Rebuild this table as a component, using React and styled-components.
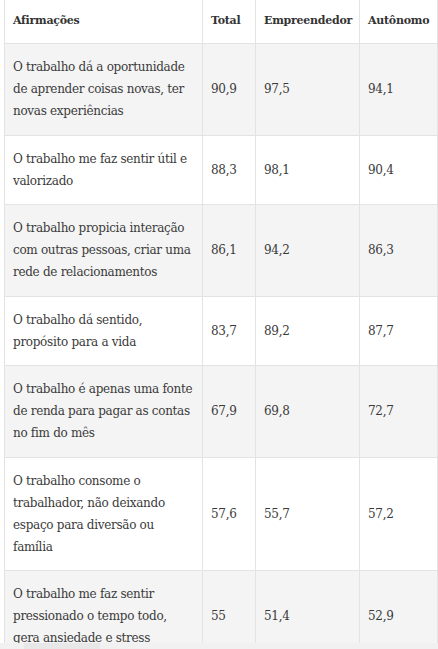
import React from "react";
import styled, { createGlobalStyle } from "styled-components";

const Global = createGlobalStyle`
  html, body { margin: 0; padding: 0; background: #fff; }
  body { width: 438px; height: 649px; overflow: hidden; }
`;

const Page = styled.div`
  display: flex;
  flex-direction: column;
  height: 649px;
`;

const Scroller = styled.div`
  flex: 1;
  overflow: hidden;
  padding-left: 4px;
`;

const Table = styled.table`
  border-collapse: collapse;
  table-layout: fixed;
  width: 433px;
  font-family: "DejaVu Serif", "Liberation Serif", serif;
  font-size: 12px;
  letter-spacing: -0.3px;
  color: #3a3a3a;
`;

const HeadCell = styled.th`
  text-align: left;
  font-weight: 700;
  font-size: 11px;
  letter-spacing: -0.25px;
  color: #333;
  padding: 10px 8px 11px;
  line-height: 22px;
  border: 1px solid #e3e3e3;
  border-top: none;
  background: #fff;
  white-space: nowrap;
`;

const Row = styled.tr`
  background: ${(p) => (p.$shade ? "#f4f4f4" : "#fff")};
`;

const Cell = styled.td`
  padding: 12px 8px 12.5px;
  line-height: 22px;
  border: 1px solid #e3e3e3;
  vertical-align: middle;
`;

const ScrollTrack = styled.div`
  height: 6px;
  background: #f1f1f1;
  display: flex;
`;

const ScrollThumb = styled.div`
  margin-left: 24px;
  width: 76px;
  background: #e8e8e8;
`;

const rows = [
  ["O trabalho dá a oportunidade de aprender coisas novas, ter novas experiências", "90,9", "97,5", "94,1"],
  ["O trabalho me faz sentir útil e valorizado", "88,3", "98,1", "90,4"],
  ["O trabalho propicia interação com outras pessoas, criar uma rede de relacionamentos", "86,1", "94,2", "86,3"],
  ["O trabalho dá sentido, propósito para a vida", "83,7", "89,2", "87,7"],
  ["O trabalho é apenas uma fonte de renda para pagar as contas no fim do mês", "67,9", "69,8", "72,7"],
  ["O trabalho consome o trabalhador, não deixando espaço para diversão ou família", "57,6", "55,7", "57,2"],
  ["O trabalho me faz sentir pressionado o tempo todo, gera ansiedade e stress", "55", "51,4", "52,9"],
];

export default function App() {
  return (
    <Page>
      <Global />
      <Scroller>
        <Table>
          <colgroup>
            <col style={{ width: 198 }} />
            <col style={{ width: 53 }} />
            <col style={{ width: 104 }} />
            <col style={{ width: 78 }} />
          </colgroup>
          <thead>
            <tr>
              <HeadCell>Afirmações</HeadCell>
              <HeadCell>Total</HeadCell>
              <HeadCell>Empreendedor</HeadCell>
              <HeadCell>Autônomo</HeadCell>
            </tr>
          </thead>
          <tbody>
            {rows.map((r, i) => (
              <Row key={i} $shade={i % 2 === 0}>
                {r.map((c, j) => (
                  <Cell key={j}>{c}</Cell>
                ))}
              </Row>
            ))}
          </tbody>
        </Table>
      </Scroller>
      <ScrollTrack>
        <ScrollThumb />
      </ScrollTrack>
    </Page>
  );
}
